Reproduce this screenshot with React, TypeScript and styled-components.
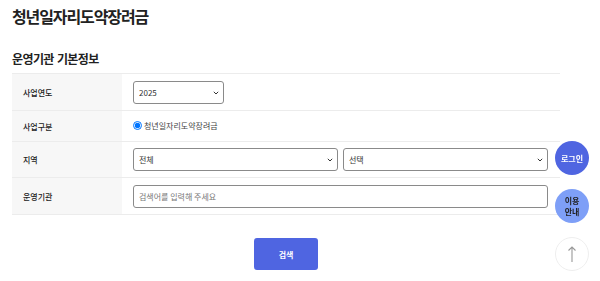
import styled, { createGlobalStyle } from "styled-components";

const GlobalStyle = createGlobalStyle`
  body {
    margin: 0;
    font-family: "Noto Sans CJK KR", "Noto Sans", sans-serif;
    color: #222;
    background: #fff;
  }
`;

const rows = ["사업연도", "사업구분", "지역", "운영기관"];

function Dropdown({ w, grow, options }: { w?: number; grow?: boolean; options: string[] }) {
  return (
    <SelectWrap $w={w} $grow={grow}>
      <Select defaultValue={options[0]}>
        {options.map((o) => (
          <option key={o} value={o}>
            {o}
          </option>
        ))}
      </Select>
      <Chevron width="6" height="4" viewBox="0 0 6 4">
        <path d="M0.8 0.8L3 3L5.2 0.8" fill="none" stroke="#333" strokeWidth="1" />
      </Chevron>
    </SelectWrap>
  );
}

export default function App() {
  return (
    <Page>
      <GlobalStyle />
      <Title>청년일자리도약장려금</Title>
      <SectionTitle>운영기관 기본정보</SectionTitle>
      <Table>
        <Row $h={37}>
          <Label>{rows[0]}</Label>
          <Cell>
            <Dropdown w={91} options={["2025", "2024"]} />
          </Cell>
        </Row>
        <Row $h={31}>
          <Label>{rows[1]}</Label>
          <Cell>
            <RadioLabel>
              <input type="radio" name="gubun" defaultChecked />
              청년일자리도약장려금
            </RadioLabel>
          </Cell>
        </Row>
        <Row $h={36}>
          <Label>{rows[2]}</Label>
          <Cell>
            <Dropdown grow options={["전체"]} />
            <Dropdown grow options={["선택"]} />
          </Cell>
        </Row>
        <Row $h={37}>
          <Label>{rows[3]}</Label>
          <Cell>
            <TextInput placeholder="검색어를 입력해 주세요" />
          </Cell>
        </Row>
      </Table>
      <Actions>
        <SearchButton>검색</SearchButton>
      </Actions>

      <Floating>
        <Circle $bg="#4f65e1" $color="#fff">로그인</Circle>
        <Circle $bg="#7e9ff7" $color="#222">
          이용
          <br />
          안내
        </Circle>
        <Circle $bg="#fff" $color="#888" $border>
          <svg width="10" height="18" viewBox="0 0 10 18">
            <path
              d="M5 17V2M1.5 5.5L5 2l3.5 3.5"
              fill="none"
              stroke="#999"
              strokeWidth="1.1"
            />
          </svg>
        </Circle>
      </Floating>
    </Page>
  );
}

const Page = styled.div`
  width: 548px;
  padding: 4px 0 0 12px;
`;

const Title = styled.h1`
  margin: 0;
  font-size: 16px;
  line-height: 24px;
  font-weight: 700;
  letter-spacing: -1.1px;
`;

const SectionTitle = styled.h2`
  margin: 22px 0 5px;
  font-size: 12px;
  line-height: 18px;
  font-weight: 700;
  letter-spacing: -0.6px;
  word-spacing: 1px;
`;

const Table = styled.div`
  border-top: 1px solid #ececec;
`;

const Row = styled.div<{ $h: number }>`
  display: grid;
  grid-template-columns: 110px 1fr;
  height: ${(p) => p.$h}px;
  border-bottom: 1px solid #ececec;
  box-sizing: border-box;
`;

const Label = styled.div`
  background: #f7f7f7;
  display: flex;
  align-items: center;
  padding-left: 11px;
  font-size: 8px;
  font-weight: 500;
`;

const Cell = styled.div`
  display: flex;
  align-items: center;
  gap: 5px;
  padding: 0 12px 0 11px;
`;

const SelectWrap = styled.div<{ $w?: number; $grow?: boolean }>`
  position: relative;
  width: ${(p) => (p.$w ? `${p.$w}px` : "auto")};
  flex: ${(p) => (p.$grow ? "1" : "none")};
`;

const Select = styled.select`
  appearance: none;
  display: block;
  width: 100%;
  height: 23px;
  font-family: inherit;
  font-size: 8px;
  color: #333;
  background: #fff;
  border: 1px solid #8a8a8a;
  border-radius: 3px;
  padding: 0 14px 0 5px;
`;

const Chevron = styled.svg`
  position: absolute;
  right: 5px;
  top: 10px;
  pointer-events: none;
`;

const RadioLabel = styled.label`
  display: flex;
  align-items: center;
  gap: 2px;
  font-size: 8px;
  color: #444;
  margin-top: -2px;

  input {
    width: 9px;
    height: 9px;
    margin: 0;
  }
`;

const TextInput = styled.input`
  flex: 1;
  height: 23px;
  box-sizing: border-box;
  font-family: inherit;
  font-size: 8px;
  padding: 0 5px;
  border: 1px solid #8a8a8a;
  border-radius: 3px;

  &::placeholder {
    color: #777;
  }
`;

const Actions = styled.div`
  display: flex;
  justify-content: center;
  padding-top: 23px;
`;

const SearchButton = styled.button`
  width: 64px;
  height: 32px;
  border: none;
  border-radius: 3px;
  background: #4f65e1;
  color: #fff;
  font-family: inherit;
  font-size: 8px;
  font-weight: 700;
`;

const Floating = styled.div`
  position: fixed;
  right: 11px;
  top: 141px;
  display: flex;
  flex-direction: column;
  gap: 14px;
`;

const Circle = styled.div<{ $bg: string; $color: string; $border?: boolean }>`
  width: 34px;
  height: 34px;
  border-radius: 50%;
  box-sizing: border-box;
  background: ${(p) => p.$bg};
  color: ${(p) => p.$color};
  border: ${(p) => (p.$border ? "1px solid #eee" : "none")};
  display: flex;
  align-items: center;
  justify-content: center;
  text-align: center;
  font-size: 8px;
  font-weight: 700;
  line-height: 11px;
`;
